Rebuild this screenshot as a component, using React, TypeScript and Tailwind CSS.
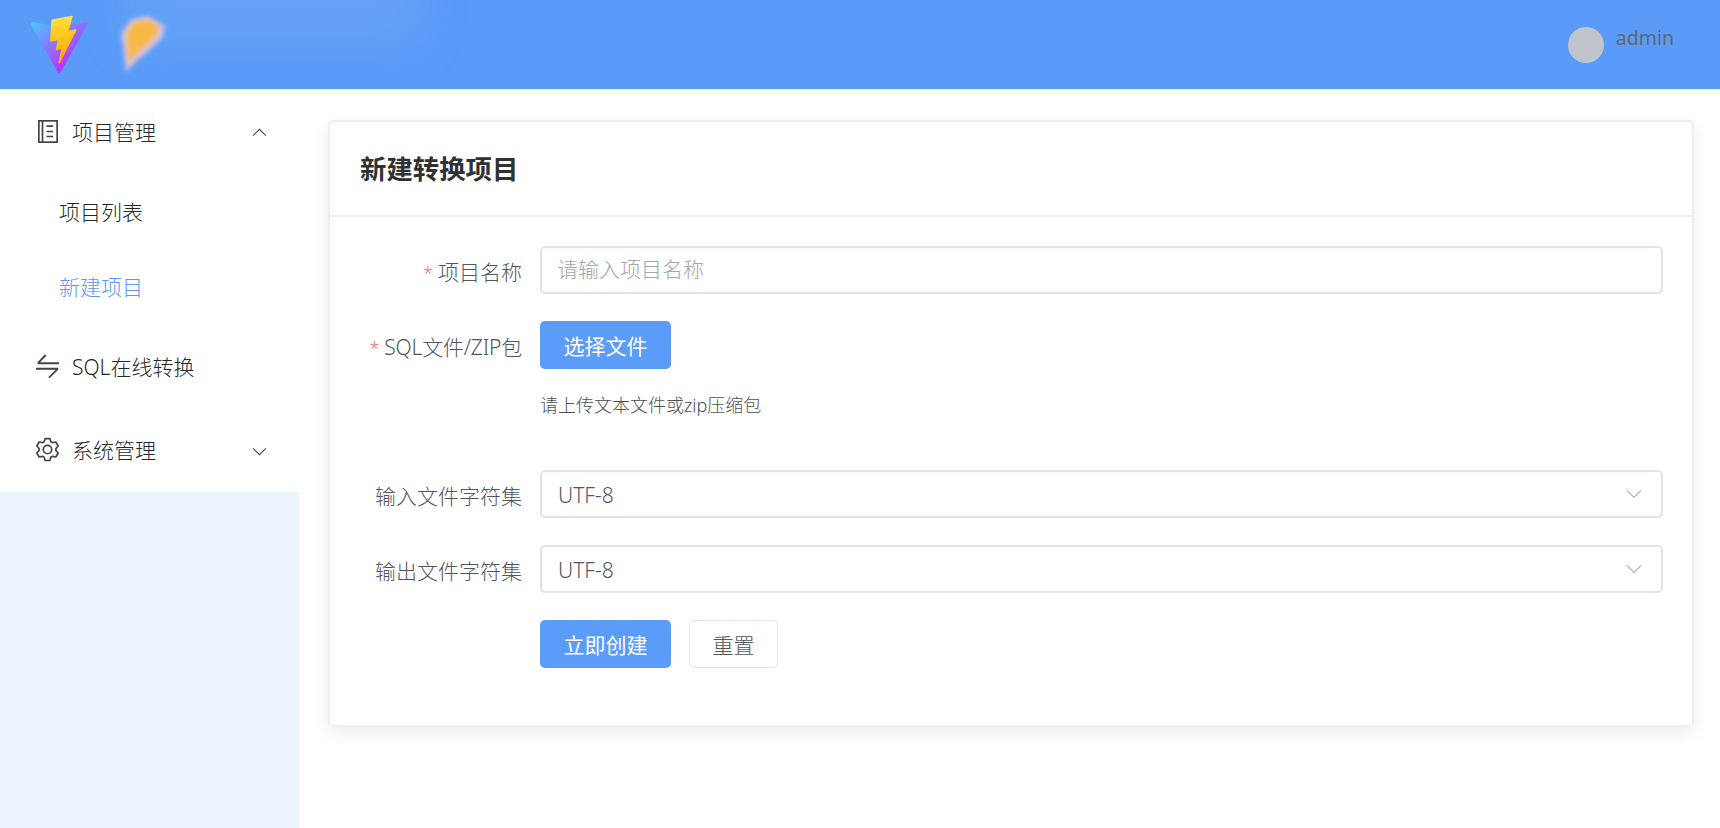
const FONT = "font-['Noto_Sans','Noto_Sans_CJK_SC',sans-serif] font-light";

const ViteLogo = () => (
  <svg viewBox="0 0 410 404" className="h-[60px] w-[60px]" fill="none">
    <defs>
      <linearGradient id="viteA" x1="6" y1="33" x2="235" y2="344" gradientUnits="userSpaceOnUse">
        <stop stopColor="#41D1FF" />
        <stop offset="1" stopColor="#BD34FE" />
      </linearGradient>
      <linearGradient id="viteB" x1="194.651" y1="8.818" x2="236.076" y2="292.989" gradientUnits="userSpaceOnUse">
        <stop stopColor="#FFEA83" />
        <stop offset="0.083" stopColor="#FFDD35" />
        <stop offset="1" stopColor="#FFA800" />
      </linearGradient>
    </defs>
    <path
      d="M399.641 59.5246L215.643 388.545C211.844 395.338 202.084 395.378 198.228 388.618L10.5817 59.5563C6.38087 52.1896 12.6802 43.2665 21.0281 44.7586L205.223 77.6824C206.398 77.8924 207.601 77.8904 208.776 77.6763L389.119 44.8058C397.439 43.2894 403.768 52.1434 399.641 59.5246Z"
      fill="url(#viteA)"
    />
    <path
      d="M292.965 1.5744L156.801 28.2552C154.563 28.6937 152.906 30.5903 152.771 32.8664L144.395 174.33C144.198 177.662 147.258 180.248 150.51 179.498L188.42 170.749C191.967 169.931 195.172 173.055 194.443 176.622L183.18 231.775C182.422 235.487 185.907 238.661 189.532 237.56L212.947 230.446C216.577 229.344 220.065 232.527 219.297 236.242L201.398 322.875C200.278 328.294 207.486 331.249 210.492 326.603L212.5 323.5L323.454 102.072C325.312 98.3645 322.108 94.137 318.036 94.9228L279.014 102.454C275.347 103.161 272.227 99.746 273.262 96.1583L298.731 7.86689C299.767 4.27314 296.636 0.855181 292.965 1.5744Z"
      fill="url(#viteB)"
    />
  </svg>
);

// the blurred-out project name next to the logo
const BlurredBrand = () => (
  <svg viewBox="0 0 400 89" className="h-[89px] w-[400px]" fill="none">
    <defs>
      <filter id="soft" x="-50%" y="-50%" width="200%" height="200%">
        <feGaussianBlur stdDeviation="2.5" />
      </filter>
      <filter id="softer" x="-50%" y="-50%" width="200%" height="200%">
        <feGaussianBlur stdDeviation="22" />
      </filter>
    </defs>
    <rect x="40" y="-30" width="290" height="70" fill="#6aa9f5" opacity="0.55" filter="url(#softer)" />
    <path d="M32 34 L42 20 L58 16 L76 26 L73 38 L56 54 L46 62 L37 72 L35 50 Z" fill="#f3c9dc" opacity="0.85" filter="url(#soft)" />
    <path d="M38 34 L44 23 L58 20 L70 26 L66 37 L54 47 L45 56 L40 63 L39 50 Z" fill="#f8b843" filter="url(#soft)" />
  </svg>
);

const NotebookIcon = () => (
  <svg viewBox="0 0 20 23" className="-mt-[2px] ml-[2.5px] h-[23px] w-5" fill="none" stroke="#444" strokeWidth="1.7">
    <rect x="0.85" y="0.85" width="18.3" height="21.3" />
    <path d="M4.5 1v21M8.5 6.2h6.5M8.5 11.5h6.5M8.5 16.5h6.5" />
  </svg>
);

const SwitchIcon = () => (
  <svg viewBox="0 0 24 24" className="ml-[1px] h-6 w-6 overflow-visible" fill="none" stroke="#444" strokeWidth="1.9">
    <path d="M1.7 7.3H23M1.7 7.3L9.7-1M0 12.7h22M22 12.7l-9 9" />
  </svg>
);

const SettingIcon = () => (
  <svg viewBox="0 0 1024 1024" className="-ml-[1px] -mt-[3px] h-[27px] w-[27px]" fill="#444">
    <path d="M600.704 64a32 32 0 0 1 30.464 22.208l35.2 109.376c14.784 7.232 28.928 15.36 42.432 24.512l112.384-24.192a32 32 0 0 1 34.432 15.36L944.32 364.8a32 32 0 0 1-4.032 37.504l-77.12 85.12a357.12 357.12 0 0 1 0 49.024l77.12 85.248a32 32 0 0 1 4.032 37.504l-88.704 153.6a32 32 0 0 1-34.432 15.296L708.8 803.904c-13.44 9.088-27.648 17.28-42.368 24.512l-35.264 109.376A32 32 0 0 1 600.704 960H423.296a32 32 0 0 1-30.464-22.208L357.696 828.48a351.616 351.616 0 0 1-42.56-24.64l-112.32 24.256a32 32 0 0 1-34.432-15.36L79.68 659.2a32 32 0 0 1 4.032-37.504l77.12-85.248a357.12 357.12 0 0 1 0-48.896l-77.12-85.248A32 32 0 0 1 79.68 364.8l88.704-153.6a32 32 0 0 1 34.432-15.296l112.32 24.256c13.568-9.152 27.776-17.408 42.56-24.64l35.2-109.312A32 32 0 0 1 423.232 64H600.64zm-23.424 64H446.72l-36.352 113.088-24.512 11.968a294.113 294.113 0 0 0-34.816 20.096l-22.656 15.36-116.224-25.088-65.28 113.152 79.68 88.192-1.92 27.136a293.12 293.12 0 0 0 0 40.192l1.92 27.136-79.808 88.192 65.344 113.152 116.224-25.024 22.656 15.296a294.113 294.113 0 0 0 34.816 20.096l24.512 11.968L446.72 896h130.688l36.48-113.152 24.448-11.904a288.282 288.282 0 0 0 34.752-20.096l22.592-15.296 116.288 25.024 65.28-113.152-79.744-88.192 1.92-27.136a293.12 293.12 0 0 0 0-40.256l-1.92-27.136 79.808-88.128-65.344-113.152-116.288 24.96-22.592-15.232a287.616 287.616 0 0 0-34.752-20.096l-24.448-11.904L577.344 128zM512 320a192 192 0 1 1 0 384 192 192 0 0 1 0-384zm0 64a128 128 0 1 0 0 256 128 128 0 0 0 0-256z" />
  </svg>
);

const Chevron = ({ up, className }: { up?: boolean; className: string }) => (
  <svg viewBox="0 0 16 10" className={className} fill="none" stroke="currentColor" strokeWidth="1.2">
    <path d={up ? "M1 8.5L8 1.5l7 7" : "M1 1.5l7 7 7-7"} />
  </svg>
);

const MenuItem = ({
  icon,
  label,
  chevron,
  height,
}: {
  icon: React.ReactNode;
  label: string;
  chevron?: "up" | "down";
  height: string;
}) => (
  <div className={`flex items-center pl-[35px] pr-[32px] text-[21px] text-[#26282c] ${height}`}>
    <span className="flex w-[37px] shrink-0">{icon}</span>
    <span className="flex-1">{label}</span>
    {chevron && <Chevron up={chevron === "up"} className="h-[9px] w-[15px] text-[#444]" />}
  </div>
);

const Label = ({ text, required, tight }: { text: string; required?: boolean; tight?: boolean }) => (
  <label className={`h-12 w-[181px] shrink-0 pr-[18px] pt-[1.5px] text-right text-[21px] leading-[48px] text-[#53565c] ${tight ? "tracking-[-0.2px]" : ""}`}>
    {required && <span className="mr-[5px] text-[18px] text-[#f56c6c]">*</span>}
    {text}
  </label>
);

const Select = ({ value }: { value: string }) => (
  <div className="flex h-12 flex-1 items-center justify-between rounded-[5px] border-2 border-[#e2e3ea] pl-[16px] pr-[19px] pt-[3px] text-[21px] text-[#53565c]">
    <span>{value}</span>
    <Chevron className="-mt-[3px] h-[10px] w-[16px] text-[#b4b6bc]" />
  </div>
);

const PrimaryButton = ({ children }: { children: React.ReactNode }) => (
  <button className="h-12 w-[131px] rounded-[5px] bg-[#5b9cf8] pt-[3px] text-[21px] font-normal text-white">{children}</button>
);

export default function App() {
  return (
    <div className={`flex h-[828px] flex-col overflow-hidden bg-white ${FONT}`}>
      <header className="flex h-[90px] shrink-0 items-center border-b border-[#e8eef6] bg-[#5a9bf8] pl-[29px] pr-[46px]">
        <ViteLogo />
        <BlurredBrand />
        <div className="ml-auto flex items-start gap-3">
          <div className="h-9 w-9 rounded-full bg-[#c0c4cc]" />
          <span className="-mt-px text-[19.5px] font-normal leading-[24px] text-[#5f6675]">admin</span>
        </div>
      </header>

      <div className="flex flex-1">
        <aside className="flex w-[299px] shrink-0 flex-col bg-[#ecf5ff]">
          <div className="bg-white">
            <MenuItem icon={<NotebookIcon />} label="项目管理" chevron="up" height="h-[85px]" />
            <div className="flex h-[76px] items-center pl-[59px] text-[21px] text-[#26282c]">项目列表</div>
            <div className="flex h-[74px] items-center pl-[59px] text-[21px] text-[#5d98f8]">新建项目</div>
            <MenuItem icon={<SwitchIcon />} label="SQL在线转换" height="h-[85px]" />
            <MenuItem icon={<SettingIcon />} label="系统管理" chevron="down" height="h-[82px]" />
          </div>
        </aside>

        <main className="flex-1 pl-[29px] pr-[26px] pt-[30px]">
          <section className="rounded-[5px] border-2 border-[#ebeef2] shadow-[0_6px_18px_rgba(0,0,0,0.08)]">
            <div className="flex h-[95px] items-center border-b-2 border-[#ebeef2] px-[30px] pt-[3px] text-[26.4px] font-bold text-[#303133]">
              新建转换项目
            </div>
            <form className="flex flex-col pb-[57px] pl-[29px] pr-[29px] pt-[29px]">
              <div className="mb-[27px] flex">
                <Label text="项目名称" required />
                <input
                  placeholder="请输入项目名称"
                  className="h-12 flex-1 rounded-[5px] border-2 border-[#e2e3ea] px-[15px] pb-[2px] text-[21px] outline-none placeholder:text-[#a3a6ad]"
                />
              </div>
              <div className="mb-[27px] flex">
                <Label text="SQL文件/ZIP包" required tight />
                <div className="flex-1">
                  <PrimaryButton>选择文件</PrimaryButton>
                  <p className="mt-[23px] text-[18px] leading-[26px] text-[#4d5056]">请上传文本文件或zip压缩包</p>
                </div>
              </div>
              <div className="mb-[27px] mt-[25px] flex">
                <Label text="输入文件字符集" />
                <Select value="UTF-8" />
              </div>
              <div className="mb-[27px] flex">
                <Label text="输出文件字符集" />
                <Select value="UTF-8" />
              </div>
              <div className="flex gap-[18px] pl-[181px]">
                <PrimaryButton>立即创建</PrimaryButton>
                <button type="button" className="h-12 w-[89px] rounded-[5px] border-[1.5px] border-[#e2e3ea] pt-[3px] text-[21px] font-light text-[#53565c]">
                  重置
                </button>
              </div>
            </form>
          </section>
        </main>
      </div>
    </div>
  );
}
